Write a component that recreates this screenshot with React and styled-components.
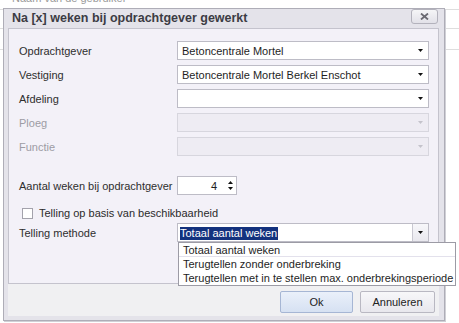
import React from 'react'
import styled, { createGlobalStyle } from 'styled-components'

const GlobalStyle = createGlobalStyle`
  body {
    margin: 0;
    font-family: "Liberation Sans", Arial, sans-serif;
    font-size: 11px;
    color: #2b2b2b;
    background:
      linear-gradient(#dedede, #dedede) 0 9px / 100% 1px no-repeat,
      linear-gradient(#dedede, #dedede) 0 28px / 100% 1px no-repeat,
      linear-gradient(#dedede, #dedede) 0 49px / 100% 1px no-repeat,
      #fff;
  }
`

const Page = styled.div`
  width: 459px;
  height: 323px;
  overflow: hidden;
`

const TopStrip = styled.div`
  height: 8px;
  overflow: hidden;
  padding-left: 12px;
  span {
    display: block;
    margin-top: -9px;
    color: #9a9a9a;
    font-size: 11px;
    line-height: 14px;
  }
`

const Dialog = styled.div`
  width: 442px;
  margin-left: 3px;
  box-sizing: border-box;
  border: 1px solid #aeadb7;
  background: #e4e3ea;
  padding: 0 5px 4px 4px;
  box-shadow: 1px 1px 0 #d0d0d6;
`

const TitleBar = styled.div`
  height: 19px;
  display: flex;
  align-items: flex-start;
  justify-content: space-between;
`

const Title = styled.div`
  padding: 2px 0 0 4px;
  font-size: 12.5px;
  font-weight: bold;
  color: #3c3c44;
  line-height: 14px;
`

const CloseButton = styled.div`
  width: 27px;
  height: 15px;
  margin-right: 1px;
  box-sizing: border-box;
  border: 1px solid #b3b2bc;
  border-radius: 3px;
  background: linear-gradient(#f5f5f7, #e2e1e8);
  display: flex;
  align-items: center;
  justify-content: center;
`

const Panel = styled.div`
  height: 256px;
  box-sizing: border-box;
  border: 1px solid #c4c3cd;
  background: #f3f1f8;
  padding: 12px 10px 0 10px;
`

const FieldRow = styled.div`
  display: grid;
  grid-template-columns: 158px 252px;
  align-items: center;
  height: 19px;
  margin-top: ${p => p.$top || 0}px;
  margin-bottom: ${p => (p.$bottom !== undefined ? p.$bottom : 5)}px;
`

const Label = styled.div`
  color: ${p => (p.$disabled ? '#9d9ca4' : '#2e2e2e')};
`

const ComboBox = styled.div`
  position: relative;
  height: 19px;
  box-sizing: border-box;
  border: 1px solid ${p => (p.$disabled ? '#d7d6de' : '#bdbcc6')};
  background: ${p => (p.$disabled ? '#eeecf3' : '#fff')};
  display: flex;
  align-items: center;
`

const ComboText = styled.div`
  flex: 1;
  padding-left: 4px;
  color: #1e1e1e;
  white-space: nowrap;
`

const Selected = styled.span`
  background: #13327e;
  color: #fff;
  padding: 0 1px 1px 0;
  margin-left: -2px;
`

const ArrowButton = styled.div`
  width: 16px;
  height: 100%;
  box-sizing: border-box;
  display: flex;
  align-items: center;
  justify-content: center;
  border-left: 1px solid ${p => (p.$open ? '#c9c8d1' : 'transparent')};
  background: ${p => (p.$open ? 'linear-gradient(#f7f7fa, #e9e8ee)' : 'transparent')};
`

const DropList = styled.div`
  position: absolute;
  top: 18px;
  left: 0;
  width: 278px;
  box-sizing: border-box;
  border: 1px solid #9c9ba5;
  background: #fff;
  z-index: 5;
`

const DropItem = styled.div`
  height: 14px;
  line-height: 14px;
  padding-left: 4px;
  color: #1e1e1e;
  white-space: nowrap;
  border-bottom: 1px solid ${p => (p.$hot ? '#e3e1ec' : 'transparent')};
  box-sizing: border-box;
`

const SpinBox = styled.div`
  width: 60px;
  height: 19px;
  box-sizing: border-box;
  border: 1px solid #bdbcc6;
  background: #fff;
  display: flex;
  align-items: center;
`

const SpinValue = styled.div`
  flex: 1;
  text-align: right;
  padding-right: 7px;
  color: #1e1e1e;
`

const SpinArrows = styled.div`
  width: 12px;
  display: flex;
  flex-direction: column;
  align-items: center;
  gap: 3px;
`

const CheckRow = styled.div`
  display: flex;
  align-items: center;
  gap: 6px;
  height: 18px;
  padding-left: 3px;
  margin-bottom: 1px;
`

const CheckBox = styled.div`
  width: 11px;
  height: 11px;
  box-sizing: border-box;
  border: 1px solid #a3a2ac;
  background: #fff;
`

const Footer = styled.div`
  height: 32px;
  box-sizing: border-box;
  background: #f0f0f2;
  display: flex;
  justify-content: flex-end;
  align-items: flex-start;
  gap: 7px;
  padding: 7px 4px 0 0;
`

const Button = styled.div`
  width: ${p => p.$w}px;
  height: 22px;
  box-sizing: border-box;
  border: 1px solid ${p => (p.$default ? '#a6b6d4' : '#b9b8c2')};
  border-radius: 2px;
  background: ${p => (p.$default
    ? 'linear-gradient(#eaf0fa, #d6e1f2)'
    : 'linear-gradient(#f7f7f9, #e8e7ed)')};
  display: flex;
  align-items: center;
  justify-content: center;
  color: #222;
`

const Arrow = ({ up, color = '#111' }) => (
  <svg width="5" height="3" viewBox="0 0 5 3">
    <polygon points={up ? '0,3 5,3 2.5,0' : '0,0 5,0 2.5,3'} fill={color} />
  </svg>
)

const Combo = ({ value, disabled }) => (
  <ComboBox $disabled={disabled}>
    <ComboText>{value}</ComboText>
    <ArrowButton>
      <Arrow color={disabled ? '#c4c3cb' : '#111'} />
    </ArrowButton>
  </ComboBox>
)

const options = [
  'Totaal aantal weken',
  'Terugtellen zonder onderbreking',
  'Terugtellen met in te stellen max. onderbrekingsperiode',
]

const App = () => (
  <Page>
    <GlobalStyle />
    <TopStrip><span>Naam van de gebruiker</span></TopStrip>
    <Dialog>
      <TitleBar>
        <Title>Na [x] weken bij opdrachtgever gewerkt</Title>
        <CloseButton>
          <svg width="9" height="7" viewBox="0 0 9 7">
            <path d="M1 0.5 L8 6.5 M8 0.5 L1 6.5" stroke="#6b6a72" strokeWidth="1.8" />
          </svg>
        </CloseButton>
      </TitleBar>
      <Panel>
        <FieldRow>
          <Label>Opdrachtgever</Label>
          <Combo value="Betoncentrale Mortel" />
        </FieldRow>
        <FieldRow>
          <Label>Vestiging</Label>
          <Combo value="Betoncentrale Mortel Berkel Enschot" />
        </FieldRow>
        <FieldRow>
          <Label>Afdeling</Label>
          <Combo value="" />
        </FieldRow>
        <FieldRow>
          <Label $disabled>Ploeg</Label>
          <Combo value="" disabled />
        </FieldRow>
        <FieldRow>
          <Label $disabled>Functie</Label>
          <Combo value="" disabled />
        </FieldRow>
        <FieldRow $top={20} $bottom={9}>
          <Label>Aantal weken bij opdrachtgever</Label>
          <SpinBox>
            <SpinValue>4</SpinValue>
            <SpinArrows>
              <Arrow up />
              <Arrow />
            </SpinArrows>
          </SpinBox>
        </FieldRow>
        <CheckRow>
          <CheckBox />
          <span>Telling op basis van beschikbaarheid</span>
        </CheckRow>
        <FieldRow $bottom={0}>
          <Label>Telling methode</Label>
          <ComboBox>
            <ComboText><Selected>Totaal aantal weken</Selected></ComboText>
            <ArrowButton $open>
              <Arrow />
            </ArrowButton>
            <DropList>
              {options.map((o, i) => (
                <DropItem key={o} $hot={i === 0}>{o}</DropItem>
              ))}
            </DropList>
          </ComboBox>
        </FieldRow>
      </Panel>
      <Footer>
        <Button $w={73} $default>Ok</Button>
        <Button $w={75}>Annuleren</Button>
      </Footer>
    </Dialog>
  </Page>
)

export default App
